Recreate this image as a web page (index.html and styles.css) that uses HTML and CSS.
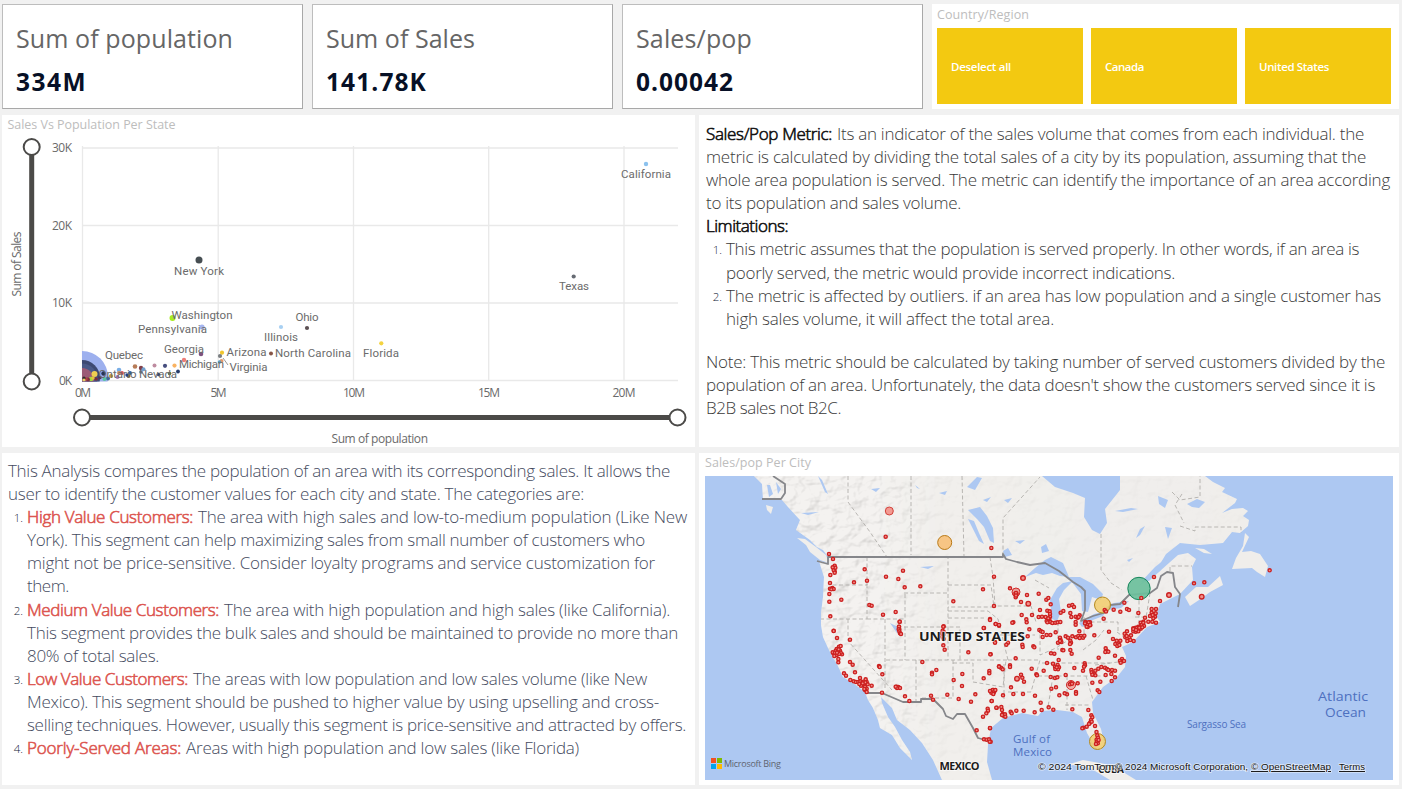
FILE: index.html
```html
<!DOCTYPE html>
<html lang="en">
<head>
<meta charset="utf-8">
<title>Sales and population report</title>
<link rel="stylesheet" href="styles.css">
</head>
<body>
<main class="report">
  <section class="row row-top">
    <article class="card"><h2><span data-w="217">Sum of population</span></h2><p><span data-w="71">334M</span></p></article>
    <article class="card"><h2><span data-w="149">Sum of Sales</span></h2><p><span data-w="101">141.78K</span></p></article>
    <article class="card"><h2><span data-w="116">Sales/pop</span></h2><p><span data-w="98">0.00042</span></p></article>
    <article class="slicer">
      <h3><span data-w="92">Country/Region</span></h3>
      <div class="tiles">
        <button><span data-w="60">Deselect all</span></button>
        <button><span data-w="39">Canada</span></button>
        <button><span data-w="70">United States</span></button>
      </div>
    </article>
  </section>

  <section class="row row-main">
    <article class="panel">
      <svg class="chart" viewBox="2 115 693 332" width="693" height="332">
        <text class="ptitle" x="7.500" y="129" textLength="168">Sales Vs Population Per State</text>
        <g class="grid">
          <path d="M83 148H678M83 225.5H678M83 303H678M83 380.5H678M82.5 146V381M218.2 146V381M353.5 146V381M488.7 146V381M624 146V381"/>
        </g>
        <clipPath id="plot"><path d="M82 140H680V381.500H82z"/></clipPath>
        <g clip-path="url(#plot)">
          <circle cx="82" cy="377" r="26" fill="#9db0ee"/>
          <circle cx="82" cy="378" r="18" fill="#3e4a72"/>
          <circle cx="82" cy="379" r="15.500" fill="#4b5a88"/>
          <circle cx="82" cy="380" r="12" fill="#9c5c76"/>
          <g id="points"></g>
        </g>
        <path d="M223 358l5 7" stroke="#999" stroke-width="1"/>
        <g class="lab">
          <text x="174" y="275" textLength="50">New York</text>
          <text x="621" y="178" textLength="50">California</text>
          <text x="559" y="290" textLength="30">Texas</text>
          <text x="171.500" y="319" textLength="61">Washington</text>
          <text x="138" y="333" textLength="69">Pennsylvania</text>
          <text x="295.500" y="321" textLength="23">Ohio</text>
          <text x="264" y="341" textLength="34">Illinois</text>
          <text x="164" y="353" textLength="40">Georgia</text>
          <text x="105" y="359" textLength="38">Quebec</text>
          <text x="226.500" y="356" textLength="40">Arizona</text>
          <text x="275" y="357" textLength="76">North Carolina</text>
          <text x="363" y="357" textLength="36">Florida</text>
          <text x="179" y="368" textLength="45">Michigan</text>
          <text x="229.500" y="371" textLength="38">Virginia</text>
          <text x="98.500" y="378" textLength="38">Ontario</text>
          <text x="139" y="378" textLength="38">Nevada</text>
        </g>
        <g class="tick">
          <text x="52" y="152" textLength="20">30K</text><text x="52" y="230" textLength="20">20K</text><text x="52" y="307" textLength="20">10K</text><text x="59" y="385" textLength="13">0K</text>
          <text x="75" y="397" textLength="16">0M</text><text x="210.500" y="397" textLength="16">5M</text><text x="343" y="397" textLength="22">10M</text><text x="478" y="397" textLength="22">15M</text><text x="612.500" y="397" textLength="23">20M</text>
          <text x="331.500" y="443" textLength="96.500">Sum of population</text>
          <text transform="translate(21 296.500) rotate(-90)" textLength="65">Sum of Sales</text>
        </g>
        <g class="slider">
          <path d="M31.700 147V381M82 417.500H678"/>
          <circle cx="31.700" cy="147" r="8"/><circle cx="31.700" cy="381.500" r="8"/>
          <circle cx="82" cy="417.500" r="8"/><circle cx="677.500" cy="417.500" r="8"/>
        </g>
      </svg>
    </article>
    <article class="panel notes">
      <p><b data-w="126">Sales/Pop Metric:</b><span class="after" data-w="527">Its an indicator of the sales volume that comes from each individual. the</span></p>
      <p><span data-w="660">metric is calculated by dividing the total sales of a city by its population, assuming that the</span></p>
      <p><span data-w="684">whole area population is served. The metric can identify the importance of an area according</span></p>
      <p><span data-w="255">to its population and sales volume.</span></p>
      <p><b data-w="82">Limitations:</b></p>
      <div class="item"><i>1.</i><div>
        <p><span data-w="633">This metric assumes that the population is served properly. In other words, if an area is</span></p>
        <p><span data-w="449">poorly served, the metric would provide incorrect indications.</span></p></div></div>
      <div class="item"><i>2.</i><div>
        <p><span data-w="655">The metric is affected by outliers. if an area has low population and a single customer has</span></p>
        <p><span data-w="328">high sales volume, it will affect the total area.</span></p></div></div>
      <p class="gap"><span data-w="679">Note: This metric should be calculated by taking number of served customers divided by the</span></p>
      <p><span data-w="669">population of an area. Unfortunately, the data doesn't show the customers served since it is</span></p>
      <p><span data-w="135">B2B sales not B2C.</span></p>
    </article>
  </section>

  <section class="row row-bottom">
    <article class="panel analysis">
      <p><span data-w="662">This Analysis compares the population of an area with its corresponding sales. It allows the</span></p>
      <p><span data-w="576">user to identify the customer values for each city and state. The categories are:</span></p>
      <div class="item"><i>1.</i><div>
        <p><b data-w="166">High Value Customers:</b><span class="after" data-w="489">The area with high sales and low-to-medium population (Like New</span></p>
        <p><span data-w="618">York). This segment can help maximizing sales from small number of customers who</span></p>
        <p><span data-w="628">might not be price-sensitive. Consider loyalty programs and service customization for</span></p>
        <p><span data-w="42">them.</span></p></div></div>
      <div class="item"><i>2.</i><div>
        <p><b data-w="192">Medium Value Customers:</b><span class="after" data-w="446">The area with high population and high sales (like California).</span></p>
        <p><span data-w="651">This segment provides the bulk sales and should be maintained to provide no more than</span></p>
        <p><span data-w="132">80% of total sales.</span></p></div></div>
      <div class="item"><i>3.</i><div>
        <p><b data-w="161">Low Value Customers:</b><span class="after" data-w="454">The areas with low population and low sales volume (like New</span></p>
        <p><span data-w="632">Mexico). This segment should be pushed to higher value by using upselling and cross-</span></p>
        <p><span data-w="659">selling techniques. However, usually this segment is price-sensitive and attracted by offers.</span></p></div></div>
      <div class="item"><i>4.</i><div>
        <p><b data-w="154">Poorly-Served Areas:</b><span class="after" data-w="393">Areas with high population and low sales (like Florida)</span></p></div></div>
    </article>
    <article class="panel mapbox">
      <h3><span data-w="106">Sales/pop Per City</span></h3>
      <svg class="map" viewBox="705 476 688 304" width="688" height="304">
        <defs>
          <path id="land" d="M754 476L762 484 763 499 782 500 788 507 800 520 796 530 810 540 817 547 823 550 829 558 828 563 819 561 824 577 823 597 821 613 821 625 823 637 828 648 832 656 837 664 843 677 853 683 865 692 868 700 873 708 878 720 880 728 892 735 900 748 912 760 910 752 902 740 895 727 888 717 882 703 881 697 892 708 897 720 910 730 922 743 933 760 942 780H992L987 762 988 745 991 728 1003 718 1022 713 1038 716 1042 711 1057 710 1073 712 1082 717 1087 733 1095 747 1101 750 1104 743 1101 729 1093 713 1092 702 1103 687 1117 677 1125 667 1126 656 1122 647 1133 642 1147 627 1160 622 1156 616 1160 604 1168 600 1180 594 1193 580 1192 567 1196 559 1188 553 1178 555 1160 571 1143 583 1137 588 1160 564 1166 554 1180 543 1200 545 1223 543 1232 532 1240 533 1248 526 1249 520 1243 516 1248 511 1243 508 1232 509 1222 513 1235 503 1237 499 1222 492 1225 488 1213 482 1205 476z"/>
          <clipPath id="lc"><use href="#land"/></clipPath>
          <linearGradient id="fade" x1="0" x2="1"><stop offset="0" stop-color="#fff"/><stop offset=".25" stop-color="#fff"/><stop offset=".35" stop-color="#fff" stop-opacity=".25"/><stop offset="1" stop-color="#fff" stop-opacity=".15"/></linearGradient>
          <mask id="west"><rect x="705" y="476" width="688" height="304" fill="url(#fade)"/></mask>
          <filter id="relief" x="0" y="0" width="1" height="1" color-interpolation-filters="sRGB"><feTurbulence type="fractalNoise" baseFrequency=".07 .085" numOctaves="3" seed="8"/><feDiffuseLighting surfaceScale="3" diffuseConstant="1.1" lighting-color="#ffffff"><feDistantLight azimuth="225" elevation="65"/></feDiffuseLighting></filter>
        </defs>
        <rect x="705" y="476" width="688" height="304" fill="#adc8f2"/>
        <g fill="#f0eeeb">
          <use href="#land"/>
          <path d="M797 538L805 539 816 547 826 555 829 563 820 560 810 552 806 545zM766 505l7 2-2 7-4-4zM1185 597L1196 587 1208 587 1220 576 1223 585 1210 592 1202 598 1190 606zM1245 533l4 4-7 15 9-1 9 3 8 12-3 11-8-5-5-4-20 1 4-11 7-12zM1195 548l9 1 8 5-8-1zM1063 766L1083 760 1105 764 1123 772 1136 780 1110 780 1090 768 1075 765z"/>
        </g>
        <g clip-path="url(#lc)"><g mask="url(#west)"><rect x="705" y="476" width="688" height="304" filter="url(#relief)" opacity=".26"/></g></g>
        <g fill="#adc8f2">
          <path d="M1042 476L1055 487 1073 493 1085 498 1084 517 1092 530 1100 534 1107 523 1105 509 1120 490 1120 476z"/>
          <path d="M968 510L980 507 987 516 993 528 994 543 990 541 984 527 977 519z"/>
          <path d="M968 519L974 521 979 533 984 544 979 541z"/>
          <path d="M1025 577L1035 568 1045 560 1051 557 1063 563 1069 577 1060 576 1052 573 1043 575 1036 573z"/>
          <path d="M1052 619L1050 600 1057 588 1063 583 1073 581 1064 590 1059 599 1061 612 1057 621z"/>
          <path d="M1068 577L1080 577 1093 584 1103 594 1101 600 1092 597 1088 612 1082 611 1081 594 1075 586z"/>
          <path d="M1079 623L1094 614 1106 611 1103 616 1093 620 1082 627z"/>
          <path d="M1104 608L1114 603 1129 601 1121 608 1108 610z"/>
          <path d="M1041 547l5-3 3 7-7 2zM1003 551l5-3 4 7-7 2zM1015 541l10-1-5 4zM1115 511l16-3 7 1-15 3zM1136 538l4-9 5-3-5 9zM1158 496l10 4-3 8-6-4zM1165 527l7 1-4 11zM1187 504l10-5 8 3-6 6-7-1zM983 500l8-3-4 5zM967 487l10-10 5 1-7 12zM1004 500l8-2-4 5zM939 493l8-2-2 4zM871 489l9-1-4 4zM818 476l7 16 3 2-6-14zM890 623l6 3 4 5-3 2zM915 485l5 4-3-1zM920 567l14-1-6 3zM1127 560l6-2-4 4zM767 485l2 12 4-3-3-9zM776 482l2 12 3-5zM801 513l18-1-11 3z"/>
          <path d="M1141 582L1155 567 1169 556 1160 571 1149 581z"/>
        </g>
        <g class="states">
          <path d="M848 476V502L870 532 887 557M911 476V555M962 476L964 556M1003 556V518L1040 477M1101 534V570L1111 583 1122 590M867 557V585H830M867 584V619H821M848 619V641L892 690M867 619H905M885 619V690M905 594V660M904 593H948V556M948 594V660M904 627H960V660M948 618H984M948 585H991L994 607H948M990 557L993 577 995 606H1031L1036 622M886 660H1009M916 660V702M953 660V698H921M953 663H973V682L1003 687 1006 660M948 611H988L998 619 1008 660M1000 635H1035M1008 660H1040L1031 692M1004 664V699M1031 692H1008M1038 676H1108M1042 663H1110M1040 628V655L1056 648 1070 639 1084 636V617M1058 622V650M1084 622H1118V633M1083 650L1096 640 1104 630M1053 676L1048 707M1067 676V710M1086 676L1093 700M1065 705H1090M1103 620V606M1139 594V622M1150 593L1146 618M1095 665L1118 662M1135 617H1150M1035 580L1049 588M1117 632L1125 638M1180 526L1195 531V527H1241V533M1172 492L1180 500 1200 497V476M1182 494L1175 505 1184 523M1170 571V566H1192"/>
        </g>
        <g class="border">
          <path d="M773 476L785 484 785 493 781 499 762 499M817 561L828 564V557H1003V554L1006 559 1017 562 1030 565 1045 563 1059 571 1073 582 1081 587 1085 591 1085 610 1081 621 1093 616 1107 612 1110 605 1120 604 1129 595 1150 593 1157 588 1161 576 1167 572 1173 573 1175 587 1180 594 1178 607M866 693H882L903 702H921V699H933L943 709 946 716 953 719 957 714 965 714 973 728 978 738 989 741"/>
        </g>
        <g id="cities"></g>
        <g class="big">
          <circle cx="889.300" cy="511" r="4" fill="#f39a92" stroke="#d2433c"/>
          <circle cx="1016" cy="592" r="4" fill="#e4695f" stroke="#d22a2a" fill-opacity=".6"/>
          <circle cx="1071" cy="685" r="4.500" fill="#ee837a" stroke="#d22a2a" fill-opacity=".6"/>
          <circle cx="944.700" cy="542.500" r="7" fill="#f7c584" stroke="#b97a18"/>
          <circle cx="1102.500" cy="605" r="8" fill="#f2cc6c" stroke="#b58a20" fill-opacity=".85"/>
          <circle cx="1097.500" cy="741.500" r="8" fill="#f2cc6c" stroke="#b58a20" fill-opacity=".85"/>
          <circle cx="1139" cy="588.500" r="11.200" fill="#6dc09c" stroke="#14855a" fill-opacity=".93"/>
        </g>
        <g id="front"></g>
        <g class="country">
          <text x="919" y="640.500" textLength="106" lengthAdjust="spacingAndGlyphs" font-size="13">UNITED STATES</text>
          <text x="939.500" y="770" textLength="40" font-size="11">MEXICO</text>
          <text x="1098" y="773" textLength="26" font-size="10">CUBA</text>
        </g>
        <g class="water">
          <text x="1013" y="743" textLength="37" font-size="11.500">Gulf of</text>
          <text x="1013" y="756" textLength="39" font-size="11.500">Mexico</text>
          <text x="1187" y="728" textLength="59" font-size="10">Sargasso Sea</text>
          <text x="1318" y="701" textLength="50" lengthAdjust="spacingAndGlyphs" font-size="13">Atlantic</text>
          <text x="1325" y="717" textLength="41" lengthAdjust="spacingAndGlyphs" font-size="13">Ocean</text>
        </g>
        <path fill="#f25022" d="M711 758h5v5h-5z"/><path fill="#7fba00" d="M717 758h5v5h-5z"/><path fill="#00a4ef" d="M711 764h5v5h-5z"/><path fill="#ffb900" d="M717 764h5v5h-5z"/>
        <text class="bing" x="724" y="767" textLength="57">Microsoft Bing</text>
        <g class="credit">
          <text x="1038" y="770" textLength="79" lengthAdjust="spacingAndGlyphs">© 2024 TomTom,</text><text x="1115" y="770" textLength="133" lengthAdjust="spacingAndGlyphs">© 2024 Microsoft Corporation,</text>
          <text x="1251" y="770" textLength="80" lengthAdjust="spacingAndGlyphs" text-decoration="underline">© OpenStreetMap</text><text x="1339" y="770" textLength="26" lengthAdjust="spacingAndGlyphs" text-decoration="underline">Terms</text>
        </g>
      </svg>
    </article>
  </section>
</main>
<script src="app.js"></script>
</body>
</html>
```
FILE: styles.css
```css
* { box-sizing: border-box; margin: 0; padding: 0; }
body { background: #f1f1f1; font-family: "Open Sans", "Noto Sans", sans-serif; overflow: hidden; }
.report { width: 1402px; height: 789px; padding: 4px 3px 4px 2px; display: flex; flex-direction: column; gap: 6px; }
.row { display: grid; }
.row-top { grid-template-columns: 301px 301px 301px 467px; column-gap: 9px; height: 105px; }
.row-main, .row-bottom { grid-template-columns: 693px 700px; column-gap: 4px; height: 332px; }
.row-bottom { margin-top: 0; }
[data-w] { display: inline-block; white-space: pre; }
.card { background: #fff; border: 1px solid #a8a8a8; border-top-color: #bdbdbd; border-left-color: #bdbdbd; padding: 13px 0 0 13px; }
.card h2 { font-weight: 400; font-size: 25px; line-height: 40px; color: #666; }
.card p { font-weight: 700; font-size: 24.500px; line-height: 47px; color: #071026; }
h3 { font-weight: 400; font-size: 12.500px; line-height: 17px; color: #bdbdbd; }
.slicer { background: #fff; padding: 2px 8px 5px 5px; }
.tiles { display: grid; grid-template-columns: repeat(3, 146px); gap: 8px; height: 76px; margin-top: 5px; }
.tiles button { border: 0; background: #f3c911; color: #fff; font: 600 11.500px "Open Sans", sans-serif; text-align: left; padding: 1px 0 0 14px; }
.panel { background: #fff; overflow: hidden; }
.chart, .map { display: block; }
.notes { padding: 7px 0 0 7px; color: #3a3a3a; }
.analysis { padding: 6px 0 0 6px; color: #454b60; }
.notes p, .analysis p { font-size: 17px; font-weight: 300; line-height: 23.100px; height: 23.100px; white-space: nowrap; }
.notes b { font-weight: 300; color: #111; -webkit-text-stroke: .6px #111; }
.analysis b { font-weight: 300; color: #dc5650; -webkit-text-stroke: .6px #dc5650; }
.after { margin-left: 5px; }
.item { display: grid; grid-template-columns: 15px 1fr; column-gap: 4px; }
.notes .item { grid-template-columns: 16px 1fr; }
.item i { font-style: normal; font-weight: 300; font-size: 11.500px; line-height: 26px; text-align: right; color: #111a38; }
.notes .gap { margin-top: 20px; }
.mapbox { padding: 1px 6px 5px; }
.mapbox h3 { margin-bottom: 5px; line-height: 17px; }
.ptitle { font-size: 12.500px; fill: #bdbdbd; }
.grid path { fill: none; stroke: #e9e9e9; stroke-width: 1.300; }
.lab { font: 11.500px Roboto, sans-serif; fill: #6b6b6b; }
.tick { font-size: 12px; fill: #6a6a6a; }
.slider path { stroke: #4b4a48; stroke-width: 5; fill: none; }
.slider circle { fill: #fff; stroke: #4b4a48; stroke-width: 2; }
.states path { fill: none; stroke: #aaa7a3; stroke-width: .8; stroke-dasharray: 4 2.500; }
.border path { fill: none; stroke: #85868a; stroke-width: 1.800; stroke-linejoin: round; }
.dot { fill: #f0908a; stroke: #cc2020; stroke-width: 1.350; }
.country { font-weight: 700; fill: #1c1c1c; paint-order: stroke; stroke: #fff; stroke-width: 1.500; stroke-opacity: .7; }
.water { font-weight: 500; fill: #4e70c0; }
.bing { font-size: 9px; fill: #5d6470; }
.credit { font: 9.500px "Liberation Sans", Arial, sans-serif; fill: #111; paint-order: stroke; stroke: #fff; stroke-width: 1.500; stroke-opacity: .6; }
```
FILE: app.js
```js
const NS = "http://www.w3.org/2000/svg";
function circle(parent, x, y, r, attrs) {
  const c = document.createElementNS(NS, "circle");
  c.setAttribute("cx", x); c.setAttribute("cy", y); c.setAttribute("r", r);
  for (const k in attrs) c.setAttribute(k, attrs[k]);
  parent.appendChild(c);
}

/* State bubbles: x, y, radius, colour */
const points = document.getElementById("points");
[[199,260,3.5,"#464e52"],[646,164,2.2,"#8cc2ee"],[573.7,276.5,2.1,"#666b73"],[172.5,318,3,"#a8ec21"],[202,327,2.6,"#a5b5f0"],
[281,327,2.1,"#a8d0f2"],[307,328,2.1,"#5c5053"],[381.3,343.3,2.1,"#f4d341"],[271,353.6,2,"#875545"],[222,352.7,2.1,"#f1c72e"],
[220,356,2.1,"#7b7f82"],[201,354,2.3,"#7d527f"],[184,360,2.2,"#ed7d78"],[221.5,361,2,"#e39a6c"],[219.5,362,1.8,"#5c9fc3"],
[135,366.5,2.3,"#b77b57"],[141,368,2.2,"#813f49"],[143.5,369.3,2,"#71a0cd"],[154.5,365.5,2,"#be8ba0"],[165,365.8,2.1,"#464e7e"],
[174.5,365.6,2.1,"#f9b261"],[178,371.5,1.9,"#263c6b"],[119,370,2.3,"#79aee6"],[119,373,1.9,"#dd9355"],[122,373,1.9,"#cf5358"],
[130,373,2,"#2e63a1"],[128.5,376,2,"#856a33"],[127,375,1.7,"#223d86"],[141,372,1.8,"#4f7bac"],[158.5,374.5,1.8,"#374870"],
[169.5,373.5,1.8,"#647135"],[117.5,377,2,"#a978b9"],[111,376,2,"#c2992b"],[108,378.5,2,"#3f649b"],[104.5,379,2,"#58c4a0"],
[103.5,373.5,2.2,"#293457"],[100,377.5,1.8,"#503359"],[96,379,1.8,"#7b2e3c"],[94.5,374,3,"#efcf51"],[91,379,2.3,"#a1d83c"],
[93,378,1.7,"#e5c43e"],[88,379.5,2,"#7d3140"],[86,379,1.8,"#b43e43"],[84,378,1.6,"#303030"],[84,380,1.5,"#e8d36a"]]
  .forEach(p => circle(points, p[0], p[1], p[2], { fill: p[3] }));

/* City markers, stored per map sector on a grid of thirds */
const sectors = [
[700,470,"387,252 399,267 404,287 402,296 404,304 401,300 406,293 398,292 404,308 391,315 390,339 390,356 397,354 401,357 394,358 388,372 388,395 424,389 391,439 494,298 462,337 501,332 557,200 558,320 595,327 609,302 614,352 661,349 508,405 515,407 549,434 587,426 599,455 597,470 598,478 401,482"],
[930,470,"184,234 192,320 159,358 70,394 192,408 180,447 197,462 207,467 162,474 41,469 240,355 291,375 326,371 273,396 275,435 289,448 290,457 250,457 247,458 258,370 258,378 261,373 254,372 257,382 349,389 355,384 362,403 330,420 306,435 326,441 336,440 347,441 352,422 359,424 360,432 360,440 358,448 350,453 361,456 367,459 355,445 352,457 376,458 383,457 391,456 400,423 392,428 417,407 427,405 432,411 421,429 424,441 437,440 443,443 449,436 446,441 437,456 437,464 466,456 470,464 475,461 480,457 481,466 473,471 521,446 551,419 571,425 583,398 591,417 597,420 672,321 690,393 716,375 625,429 645,443 665,417 678,417 665,428 673,432 675,440 670,445 678,458 667,455 655,455 660,438 668,435 677,430 640,455 632,458 634,466 625,470 617,473 610,475"],
[990,570,"292,163 296,157 300,165 285,160 290,170 148,180 153,184 158,186 158,201 170,195 181,195 197,187 118,178 113,199 54,218 49,224 15,216 97,224 98,231 130,229 133,232 210,203 212,210 214,216 204,218 210,213 227,199 234,203 247,199 241,212 243,218 240,222 258,202 265,198 268,184 273,198 279,203 283,197 269,204 313,196 357,185 217,240 220,241 241,240 245,251 183,250 193,251 77,265 60,286 60,291 27,289 33,293 38,298 2,253 206,270 171,279 189,281 195,290 203,285 207,292 204,298 196,297 200,292 125,296 161,302 139,313 141,316 182,321 195,324 202,322 227,315 253,294 284,280 285,286 282,290 279,302 326,263 347,235 350,243 346,246 355,245 375,257 396,267 390,272 398,274 402,273 392,278 376,222 382,215 385,220 382,228 388,225 369,207 380,212 391,212 404,191 411,184 406,202 412,205 418,201 412,213 421,210 431,213 410,198 423,196 430,184 435,178 440,174 445,178 450,170 455,165 460,158 437,185 445,184 452,176 462,168 430,177 438,180 448,173 457,172 304,300 305,307 316,302 325,296 334,291 345,293 351,297 355,300 366,300 375,302 312,311 316,316 307,314 347,315 364,312 331,335 307,338 375,322 365,333 323,361 328,366 258,366 258,371 263,340 231,373 224,370 208,376 198,352 184,356 93,314 97,323 102,335 63,352 39,376 70,372 99,372 135,377 152,398 10,360 5,365 12,366 8,370 5,393 20,413 34,411 36,420 38,432 41,437 45,433 46,440 36,435 62,425 65,430 79,422 101,422 134,427 155,420 176,412 190,419 247,418 295,420 304,436 307,442 303,450 300,458 297,462 305,455 290,470 280,473 277,475 315,468 0,475 2,515"],
[800,620,"101,33 111,54 117,80 122,78 110,87 107,92 100,100 113,95 120,92 126,103 98,97 110,105 103,108 115,117 115,127 122,98 116,88 105,98 117,102 111,98 150,59 150,126 158,134 132,160 138,167 165,157 151,180 161,184 168,186 175,186 181,184 185,190 190,185 197,178 200,186 192,192 187,196 195,200 200,206 195,210 200,216 180,174 203,193 183,197 178,192 196,187 188,190 193,207 215,197 246,218 247,163 237,138 239,141 297,20 296,28 298,34 300,40 303,42 299,5 290,200 295,201 300,204 291,204 287,200 315,229 328,243 367,126 396,158 396,163 409,150 393,227 399,239 442,224 461,180 487,162 486,198 476,237 513,245 526,223 551,175 568,153 568,160 597,140 430,20 428,32 426,40 430,44 427,50 431,57 432,37 430,76 434,89 505,97 571,103 585,68 551,24 587,12 597,15 570,0 578,210 583,214 574,218 580,222 570,213 586,210 575,243 563,266 564,272 559,280 549,290 589,263 570,324 530,331 552,358 560,359 567,358 569,365"],
[1160,470,"102,340 133,337 329,301"]
];
const cities = document.getElementById("cities");
for (const [ox, oy, list] of sectors)
  for (const pair of list.split(" ")) {
    const [x, y] = pair.split(",").map(Number);
    circle(cities, ox + x / 3, oy + y / 3, 1.6, { class: "dot" });
  }
[[1023,578],[1028.3,603.7],[1017,678.7],[1169,595],[1201.7,596.7]].forEach(p => circle(cities, p[0], p[1], 2.3, { class: "dot" }));
const front = document.getElementById("front");
[[1104.7,610],[1106,611.5],[1141.3,598],[1096.5,732],[1097.3,735.5],[1098,737.7],[1096.6,739.7],[1096.8,741.7],[1097.8,743.3],[1096,744],[1098.6,740],
 [1071,683.3],[1070,684.3],[1072,683.7],[1016,593],[1016,595.5]].forEach(p => circle(front, p[0], p[1], 1.6, { class: "dot" }));

document.querySelectorAll("[data-w]").forEach(el => {
  const natural = el.getBoundingClientRect().width;
  el.style.letterSpacing = (el.dataset.w - natural) / el.textContent.length + "px";
});
```
